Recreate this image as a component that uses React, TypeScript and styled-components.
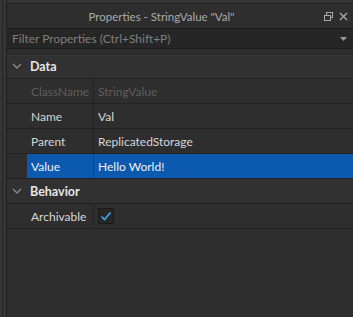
import styled, { createGlobalStyle } from 'styled-components';

const Global = createGlobalStyle`
    html, body {
        margin: 0;
        padding: 0;
        background: #2e2e2e;
        overflow: hidden;
    }
    * { box-sizing: border-box; }
`;

const Page = styled.div`
    display: flex;
    width: 353px;
    height: 317px;
    font-family: Lato, 'Open Sans', sans-serif;
    font-size: 12px;
    background: #2e2e2e;
`;

const SideStrip = styled.div`
    width: 7px;
    flex: none;
    background: #353535;
    border-left: 2px solid #353535;
    border-right: 1px solid #1f1f1f;
    box-shadow: inset 1px 0 0 #262626;
`;

const Panel = styled.div`
    flex: 1;
    display: flex;
    flex-direction: column;
    border-top: 3px solid #353535;
`;

const TitleBar = styled.div`
    height: 25px;
    border-top: 1px solid #222;
    display: flex;
    align-items: center;
    background: #2e2e2e;
    color: #aaaaaa;
`;

const Title = styled.div`
    flex: 1;
    text-align: center;
    padding-right: 8px;
    font-size: 11.5px;
`;

const TitleIcons = styled.div`
    display: flex;
    gap: 6px;
    padding-right: 5px;
    align-items: center;
`;

const Filter = styled.div`
    height: 21px;
    margin-left: -1px;
    background: #262626;
    border-top: 1px solid #1c1c1c;
    border-bottom: 1px solid #1c1c1c;
    display: flex;
    align-items: center;
    padding: 0 6px 0 6px;
    color: #7f7f7f;
    font-size: 12px;
`;

const FilterText = styled.span`
    flex: 1;
`;

const Grid = styled.div`
    margin-top: 4px;
    border-top: 1px solid #222;
    display: flex;
    flex-direction: column;
`;

const Section = styled.div`
    height: 25px;
    border-bottom: 1px solid #222;
    display: flex;
    align-items: center;
    padding-left: 5px;
    gap: 8px;
    color: #e6e6e6;
    font-weight: 700;
    font-size: 12.5px;
    background: #313131;
`;

const Row = styled.div`
    height: 25px;
    display: flex;
    padding-left: 20px;
    border-bottom: 1px solid #222;
    background: #2e2e2e;
`;

const Cell = styled.div<{ $selected?: boolean; $dim?: boolean; $name?: boolean }>`
    display: flex;
    align-items: center;
    padding-left: 4px;
    width: ${p => (p.$name ? '67px' : 'auto')};
    flex: ${p => (p.$name ? 'none' : '1')};
    border-right: ${p => (p.$name ? `1px solid ${p.$selected ? '#0a4788' : '#222'}` : 'none')};
    background: ${p => (p.$selected ? '#0b5aaf' : 'transparent')};
    color: ${p => (p.$dim ? '#5e5e5e' : p.$selected ? '#f0f0f0' : '#d6d6d6')};
    white-space: nowrap;
`;

const Check = styled.div`
    width: 16px;
    height: 16px;
    background: #262626;
    border: 1px solid #1a1a1a;
    display: flex;
    align-items: center;
    justify-content: center;
`;

const Chevron = () => (
    <svg width="10" height="6" viewBox="0 0 10 6">
        <path d="M1 1 L5 5 L9 1" stroke="#8a8a8a" strokeWidth="1.3" fill="none" />
    </svg>
);

export default function App() {
    const data = [
        { name: 'ClassName', value: 'StringValue', dim: true },
        { name: 'Name', value: 'Val' },
        { name: 'Parent', value: 'ReplicatedStorage' },
        { name: 'Value', value: 'Hello World!', selected: true },
    ];

    return (
        <Page>
            <Global />
            <SideStrip />
            <Panel>
                <TitleBar>
                    <Title>Properties - StringValue "Val"</Title>
                    <TitleIcons>
                        <svg width="9" height="9" viewBox="0 0 9 9">
                            <rect x="2.5" y="0.5" width="6" height="5" stroke="#a8a8a8" fill="none" />
                            <rect x="0.5" y="3.5" width="6" height="5" stroke="#a8a8a8" fill="#2e2e2e" />
                        </svg>
                        <svg width="9" height="9" viewBox="0 0 9 9">
                            <path d="M1 1 L8 8 M8 1 L1 8" stroke="#a8a8a8" strokeWidth="1.4" />
                        </svg>
                    </TitleIcons>
                </TitleBar>
                <Filter>
                    <FilterText>Filter Properties (Ctrl+Shift+P)</FilterText>
                    <svg width="7" height="4" viewBox="0 0 7 4">
                        <path d="M0 0 L7 0 L3.5 4 Z" fill="#9a9a9a" />
                    </svg>
                </Filter>
                <Grid>
                    <Section>
                        <Chevron />
                        Data
                    </Section>
                    {data.map(r => (
                        <Row key={r.name}>
                            <Cell $name $dim={r.dim} $selected={r.selected}>{r.name}</Cell>
                            <Cell $dim={r.dim} $selected={r.selected}>{r.value}</Cell>
                        </Row>
                    ))}
                    <Section>
                        <Chevron />
                        Behavior
                    </Section>
                    <Row>
                        <Cell $name>Archivable</Cell>
                        <Cell>
                            <Check>
                                <svg width="12" height="10" viewBox="0 0 12 10">
                                    <path d="M1.5 5.5 L4.5 8.5 L10.5 1.5" stroke="#3fa7f3" strokeWidth="1.6" fill="none" />
                                </svg>
                            </Check>
                        </Cell>
                    </Row>
                </Grid>
            </Panel>
        </Page>
    );
}
